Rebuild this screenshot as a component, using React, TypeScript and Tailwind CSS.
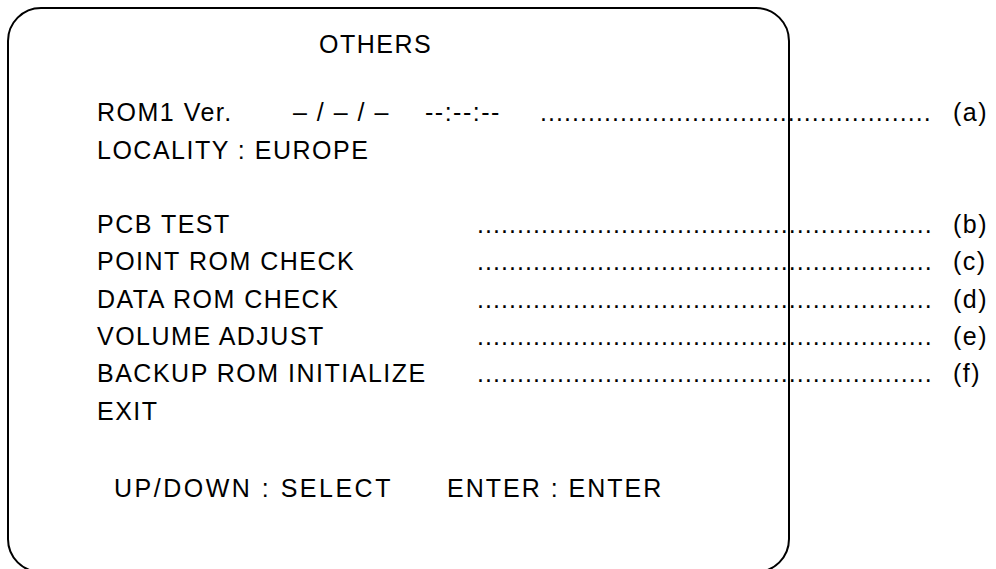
import React from "react";

const font = { fontFamily: '"Liberation Sans", Arial, sans-serif' };

function Dots({ n, w }: { n: number; w: string }) {
  return (
    <span className={`${w} shrink-0 tracking-[1.05px]`}>
      {".".repeat(n)}
    </span>
  );
}

const items: [string, string][] = [
  ["PCB TEST", "(b)"],
  ["POINT ROM CHECK", "(c)"],
  ["DATA ROM CHECK", "(d)"],
  ["VOLUME ADJUST", "(e)"],
  ["BACKUP ROM INITIALIZE", "(f)"],
];

export default function App() {
  return (
    <div
      className="h-[569px] w-[996px] overflow-hidden bg-white text-[25px] leading-[37.3px] tracking-[1.5px] text-black"
      style={font}
    >
      <div className="relative ml-[7px] mt-[7px] h-[566px] w-[783px] pl-[90px] pt-[19px] after:pointer-events-none after:absolute after:inset-0 after:rounded-[34px] after:border-2 after:border-black after:content-['']">
        <div className="pl-[222px]">OTHERS</div>
        <div className="mt-[31px] flex w-[900px] whitespace-nowrap">
          <span className="w-[196px] shrink-0">ROM1 Ver.</span>
          <span className="w-[132px] shrink-0">– / – / –</span>
          <span className="w-[115px] shrink-0">--:--:--</span>
          <Dots n={49} w="w-[393px]" />
          <span className="ml-[20px]">(a)</span>
        </div>
        <div>LOCALITY : EUROPE</div>
        <div className="h-[37.3px]" />
        {items.map(([label, tag]) => (
          <div key={tag} className="flex w-[900px] whitespace-nowrap">
            <span className="w-[380px] shrink-0">{label}</span>
            <Dots n={57} w="w-[457px]" />
            <span className="ml-[19px]">{tag}</span>
          </div>
        ))}
        <div>EXIT</div>
        <div className="mt-[39.6px] flex whitespace-nowrap pl-[17px]">
          <span className="w-[333px] shrink-0 tracking-[2.5px]">UP/DOWN : SELECT</span>
          <span className="tracking-[2px]">ENTER : ENTER</span>
        </div>
      </div>
    </div>
  );
}
